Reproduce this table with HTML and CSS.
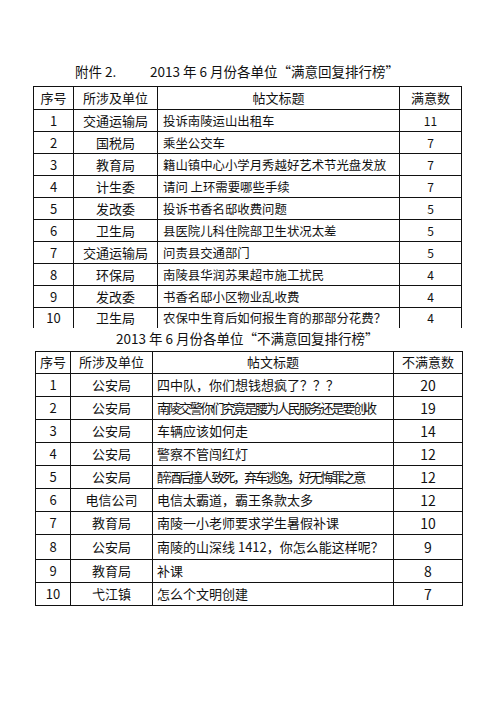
FILE: index.html
```html
<!DOCTYPE html>
<html lang="zh-CN">
<head>
<meta charset="utf-8">
<title>排行榜</title>
<link rel="stylesheet" href="styles.css">
</head>
<body>
<div class="page">
  <h1 class="title1"><span class="attach">附件 2.</span>2013 年 6 月份各单位“满意回复排行榜”</h1>
  <table class="t1">
    <colgroup><col class="c1"><col class="c2"><col class="c3"><col class="c4"></colgroup>
    <tr class="head"><td>序号</td><td>所涉及单位</td><td class="ctr">帖文标题</td><td>满意数</td></tr>
    <tr><td>1</td><td>交通运输局</td><td class="tt">投诉南陵运山出租车</td><td class="num">11</td></tr>
    <tr><td>2</td><td>国税局</td><td class="tt">乘坐公交车</td><td class="num">7</td></tr>
    <tr><td>3</td><td>教育局</td><td class="tt">籍山镇中心小学月秀越好艺术节光盘发放</td><td class="num">7</td></tr>
    <tr><td>4</td><td>计生委</td><td class="tt">请问 上环需要哪些手续</td><td class="num">7</td></tr>
    <tr><td>5</td><td>发改委</td><td class="tt">投诉书香名邸收费问题</td><td class="num">5</td></tr>
    <tr><td>6</td><td>卫生局</td><td class="tt">县医院儿科住院部卫生状况太差</td><td class="num">5</td></tr>
    <tr><td>7</td><td>交通运输局</td><td class="tt">问责县交通部门</td><td class="num">5</td></tr>
    <tr><td>8</td><td>环保局</td><td class="tt">南陵县华润苏果超市施工扰民</td><td class="num">4</td></tr>
    <tr><td>9</td><td>发改委</td><td class="tt">书香名邸小区物业乱收费</td><td class="num">4</td></tr>
    <tr class="last"><td>10</td><td>卫生局</td><td class="tt">农保中生育后如何报生育的那部分花费？</td><td class="num">4</td></tr>
  </table>
  <h2 class="title2">2013 年 6 月份各单位“不满意回复排行榜”</h2>
  <table class="t2">
    <colgroup><col class="d1"><col class="d2"><col class="d3"><col class="d4"></colgroup>
    <tr class="head"><td>序号</td><td>所涉及单位</td><td class="ctr">帖文标题</td><td>不满意数</td></tr>
    <tr><td>1</td><td>公安局</td><td class="tt">四中队，你们想钱想疯了？？？</td><td class="num">20</td></tr>
    <tr><td>2</td><td>公安局</td><td class="tt tight">南陵交警你们究竟是腰为人民服务还是要创收</td><td class="num">19</td></tr>
    <tr><td>3</td><td>公安局</td><td class="tt">车辆应该如何走</td><td class="num">14</td></tr>
    <tr><td>4</td><td>公安局</td><td class="tt">警察不管闯红灯</td><td class="num">12</td></tr>
    <tr><td>5</td><td>公安局</td><td class="tt tight">醉酒后撞人致死，弃车逃逸，好无悔罪之意</td><td class="num">12</td></tr>
    <tr><td>6</td><td>电信公司</td><td class="tt">电信太霸道，霸王条款太多</td><td class="num">12</td></tr>
    <tr><td>7</td><td>教育局</td><td class="tt">南陵一小老师要求学生暑假补课</td><td class="num">10</td></tr>
    <tr class="tall"><td>8</td><td>公安局</td><td class="tt">南陵的山深线 1412，你怎么能这样呢？</td><td class="num">9</td></tr>
    <tr><td>9</td><td>教育局</td><td class="tt">补课</td><td class="num">8</td></tr>
    <tr><td>10</td><td>弋江镇</td><td class="tt">怎么个文明创建</td><td class="num">7</td></tr>
  </table>
</div>
</body>
</html>
```

FILE: styles.css
```css
html, body {
  margin: 0;
  padding: 0;
  background: #ffffff;
}
body {
  width: 496px;
  height: 702px;
  overflow: hidden;
  font-family: "Noto Sans CJK SC", "Noto Sans", sans-serif;
  color: #111111;
}
.page {
  padding-top: 62px;
}
.title1 {
  margin: 0 0 6px 75px;
  font-size: 13.5px;
  line-height: 18px;
  font-weight: normal;
  white-space: nowrap;
}
.attach {
  display: inline-block;
  width: 75px;
}
table {
  border-collapse: collapse;
  table-layout: fixed;
}
td {
  border: 1px solid #111111;
  padding: 0;
  text-align: center;
  vertical-align: middle;
  white-space: nowrap;
  overflow: hidden;
  font-size: 13px;
  line-height: 16px;
}
.t1 {
  margin-left: 33px;
  width: 428px;
}
.t1 .c1 { width: 40px; }
.t1 .c2 { width: 84px; }
.t1 .c3 { width: 242px; }
.t1 .c4 { width: 62px; }
.t1 tr { height: 22px; }
.t1 tr.head { height: 23px; }
.t1 tr.last { height: 20px; }
.t1 tr.last td { border-bottom: none; }
.t1 td.tt {
  text-align: left;
  padding-left: 5px;
  font-size: 12.4px;
}
.t1 td.num {
  font-size: 12px;
}
.title2 {
  margin: 1px 0 4px 116px;
  text-align: left;
  font-size: 13.5px;
  line-height: 18px;
  font-weight: normal;
  white-space: nowrap;
}
.t2 {
  margin-left: 35px;
  width: 427px;
}
.t2 .d1 { width: 35px; }
.t2 .d2 { width: 82px; }
.t2 .d3 { width: 241px; }
.t2 .d4 { width: 69px; }
.t2 tr { height: 23px; }
.t2 tr.head { height: 22px; }
.t2 tr.tall { height: 25px; }
.t2 td.tt {
  text-align: left;
  padding-left: 4px;
}
.t2 td.tight {
  letter-spacing: -2.1px;
}
.t2 td.num {
  font-size: 14px;
}
```
